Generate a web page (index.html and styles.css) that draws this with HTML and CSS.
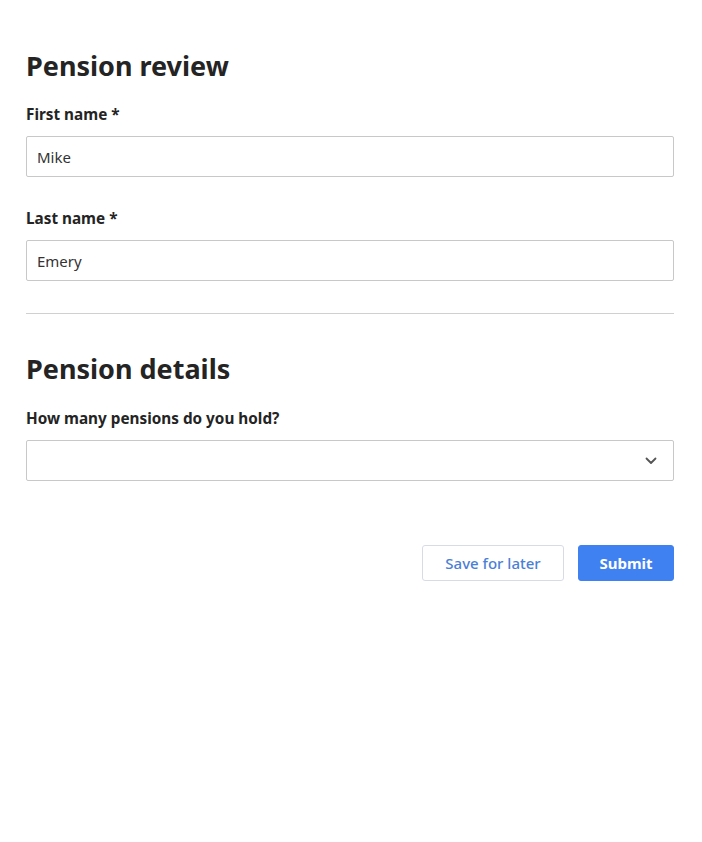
FILE: index.html
```html
<!DOCTYPE html>
<html lang="en">
<head>
<meta charset="utf-8">
<title>Pension review</title>
<link rel="stylesheet" href="styles.css">
</head>
<body>
<main class="form">
  <section class="section">
    <h1 class="title">Pension review</h1>
    <div class="field">
      <label class="label" for="first">First name *</label>
      <input class="input" id="first" type="text" value="Mike">
    </div>
    <div class="field">
      <label class="label" for="last">Last name *</label>
      <input class="input" id="last" type="text" value="Emery">
    </div>
  </section>
  <hr class="divider">
  <section class="section">
    <h1 class="title">Pension details</h1>
    <div class="field">
      <label class="label" for="count">How many pensions do you hold?</label>
      <div class="select-wrap">
        <select class="input select" id="count">
          <option></option>
        </select>
        <svg class="chevron" width="12" height="8" viewBox="0 0 12 8" aria-hidden="true"><path d="M1.5 1.5 L6 6 L10.5 1.5" fill="none" stroke="#555" stroke-width="1.8" stroke-linecap="round" stroke-linejoin="round"/></svg>
      </div>
    </div>
  </section>
  <div class="actions">
    <button class="btn btn-secondary" type="button">Save for later</button>
    <button class="btn btn-primary" type="button">Submit</button>
  </div>
</main>
</body>
</html>
```
FILE: styles.css
```css
* { box-sizing: border-box; }
html, body { margin: 0; padding: 0; background: #fff; }
body {
  font-family: "Noto Sans", "Open Sans", sans-serif;
  color: #242424;
}
.form {
  width: 648px;
  margin: 0 0 0 26px;
  padding-top: 44px;
  display: flex;
  flex-direction: column;
}
.section { display: flex; flex-direction: column; }
.title {
  margin: 0 0 16px;
  font-size: 27px;
  line-height: 44px;
  font-weight: 700;
  color: #242424;
}
.divider + .section .title { margin-bottom: 17px; }
.field { display: flex; flex-direction: column; margin-bottom: 31px; }
.field:last-child { margin-bottom: 0; }
.label {
  font-size: 15.3px;
  font-weight: 700;
  line-height: 20px;
  margin-bottom: 12px;
  color: #242424;
}
.input {
  height: 41px;
  width: 100%;
  border: 1px solid #c8c8c8;
  border-radius: 2px;
  padding: 0 10px;
  font-family: inherit;
  font-size: 15px;
  color: #333;
  background: #fff;
  outline: none;
}
.divider {
  border: 0;
  border-top: 1px solid #d0d0d0;
  margin: 32px 0 33px;
  width: 100%;
}
.select-wrap { position: relative; }
.select { appearance: none; -webkit-appearance: none; }
.chevron { position: absolute; right: 17px; top: 17px; pointer-events: none; }
.actions {
  display: flex;
  justify-content: flex-end;
  gap: 14px;
  margin-top: 64px;
}
.btn {
  height: 36px;
  border-radius: 3px;
  font-family: inherit;
  font-size: 15px;
  font-weight: 600;
  padding: 0;
  white-space: nowrap;
  cursor: pointer;
}
.btn-secondary {
  width: 142px;
  background: #fff;
  border: 1px solid #d6dbe6;
  color: #4a7fd6;
  font-weight: 500;
}
.btn-primary {
  width: 96px;
  background: #3f81f0;
  border: 1px solid #3f81f0;
  color: #fff;
  font-weight: 700;
}
```
